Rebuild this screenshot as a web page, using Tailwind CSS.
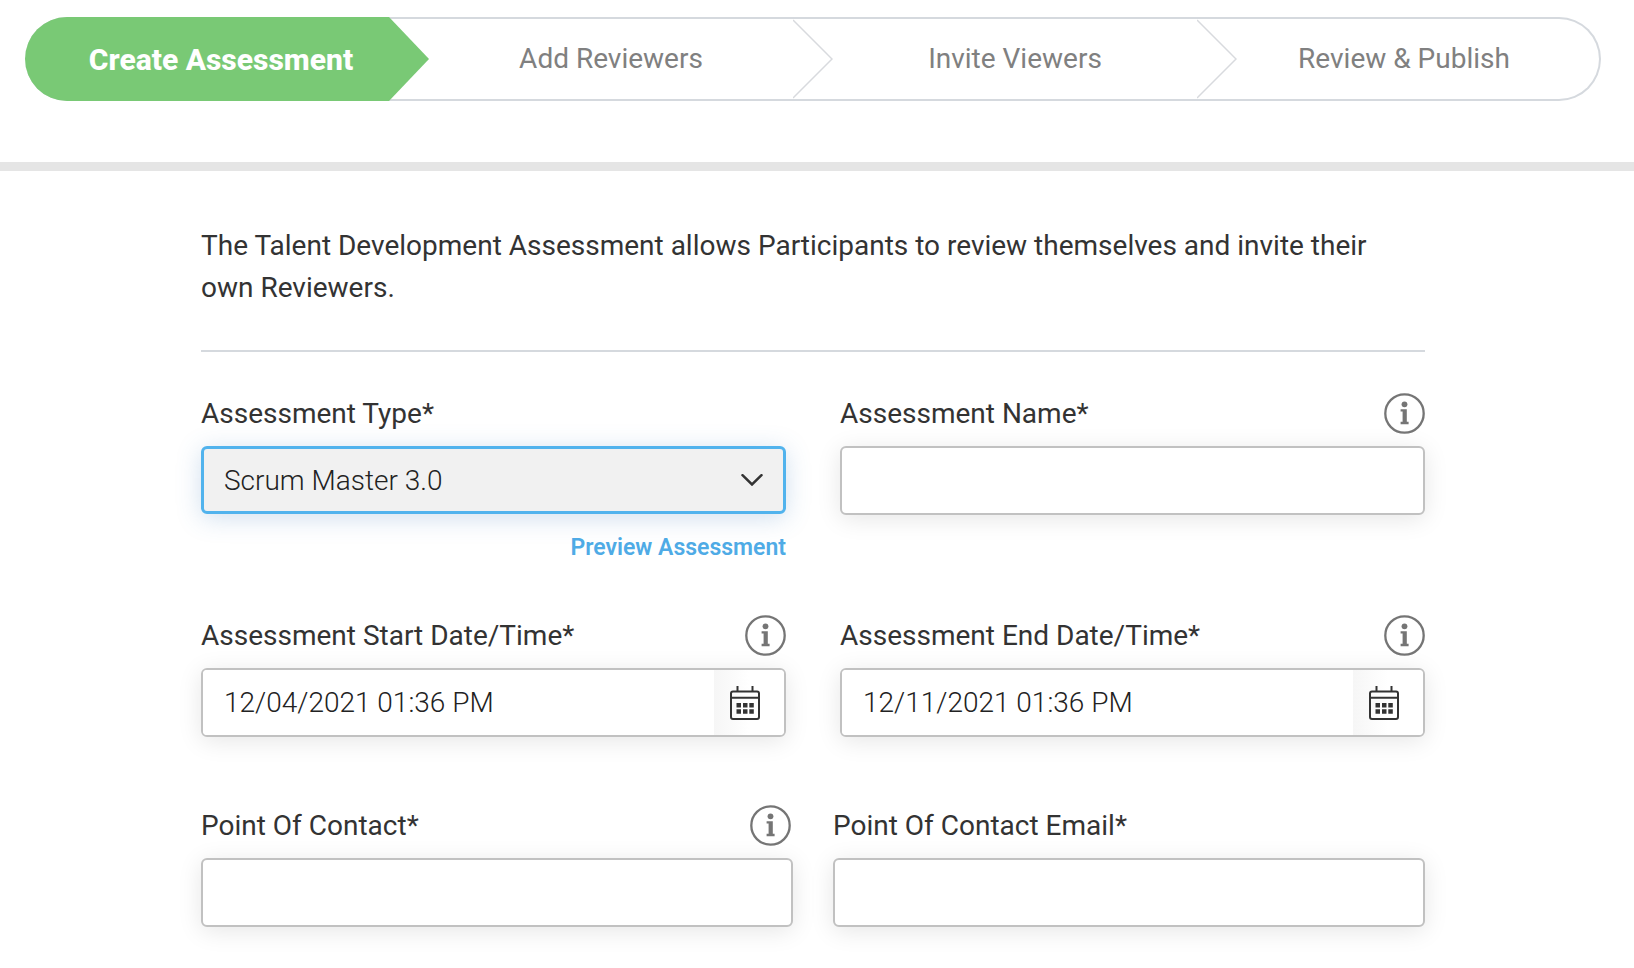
<!DOCTYPE html>
<html lang="en">
<head>
<meta charset="utf-8">
<meta name="viewport" content="width=device-width, initial-scale=1">
<title>Create Assessment</title>
<script src="https://cdn.jsdelivr.net/npm/@tailwindcss/browser@4"></script>
</head>
<body class="min-h-screen bg-white font-['Roboto',sans-serif] text-[28px] text-[#333333]">
<svg class="hidden" aria-hidden="true">
  <symbol id="info" viewBox="0 0 41 41">
    <circle cx="20.5" cy="20.5" r="19.2" fill="none" stroke="#757575" stroke-width="2.3"/>
    <circle cx="20.5" cy="11.3" r="2.9" fill="#757575"/>
    <path d="M16.6 16.2h6.2v12.6h1.8v2.4h-8v-2.4h2v-10.200h-2z" fill="#757575"/>
  </symbol>
  <symbol id="calendar" viewBox="0 0 30 34">
    <rect x="1" y="5.500" width="28" height="27.500" rx="2" fill="none" stroke="#333333" stroke-width="2"/>
    <path d="M1 11.700h28M7.500 0v6M22.500 0v6" fill="none" stroke="#333333" stroke-width="2"/>
    <path d="M6.500 17h4.500v4.500h-4.500zM13 17h4.500v4.500h-4.500zM19.300 17h4.500v4.500h-4.500zM6.500 23.300h4.500v4.500h-4.500zM13 23.300h4.500v4.500h-4.500zM19.300 23.300h4.500v4.500h-4.500z" fill="#333333"/>
  </symbol>
</svg>

<header class="border-b-9 border-[#e5e5e5] pt-[17px] pr-[33px] pb-[61px] pl-[25px]">
  <nav aria-label="Assessment steps">
    <ol class="grid h-[84px] grid-cols-[404fr_404fr_404fr_362fr] rounded-full border-y-2 border-r-2 border-[#d5d9de] text-[#808080]">
      <li class="-my-0.5 flex">
        <button class="flex flex-1 items-center justify-center rounded-l-full bg-[#79c975] pl-7 text-[30px] font-extrabold text-white" aria-current="step">Create Assessment</button>
        <svg class="h-full w-10 shrink-0" viewBox="0 0 40 84" aria-hidden="true"><path d="M0 0V84L40 42z" fill="#79c975"/></svg>
      </li>
      <li class="flex">
        <button class="flex-1">Add Reviewers</button>
        <svg class="h-full w-10 shrink-0" viewBox="0 0 40 80" aria-hidden="true"><path d="M0 1L39 40L0 79" fill="none" stroke="#d8dade" stroke-width="1.500"/></svg>
      </li>
      <li class="flex">
        <button class="flex-1">Invite Viewers</button>
        <svg class="h-full w-10 shrink-0" viewBox="0 0 40 80" aria-hidden="true"><path d="M0 1L39 40L0 79" fill="none" stroke="#d8dade" stroke-width="1.500"/></svg>
      </li>
      <li class="flex pr-7">
        <button class="flex-1">Review &amp; Publish</button>
      </li>
    </ol>
  </nav>
</header>

<main class="pr-2">
  <form class="mx-auto max-w-[1224px] pt-[54px] pb-10">
    <p class="border-b-2 border-[#d5d9de] pb-[41px] leading-[42px]">The Talent Development Assessment allows Participants to review themselves and invite their own Reviewers.</p>

    <div class="grid grid-cols-2 gap-x-[54px] pt-[41px]">
      <div>
        <div class="mb-3 flex h-[41px] items-center justify-between">
          <label for="type">Assessment Type*</label>
        </div>
        <div class="relative">
          <select id="type" class="block h-[68px] w-full appearance-none rounded-md border-3 border-[#51b3ed] bg-[#f1f1f1] px-5 pt-0.5 font-light text-[#222222] shadow-[0_4px_24px_rgba(70,130,190,0.25)] outline-none">
            <option>Scrum Master 3.0</option>
          </select>
          <svg class="pointer-events-none absolute top-7 right-[23px] h-3 w-[22px]" viewBox="0 0 22 12" aria-hidden="true"><path d="M1.500 1.200L11 10.500L20.500 1.200" fill="none" stroke="#333333" stroke-width="2.500" stroke-linecap="round"/></svg>
        </div>
        <div class="mt-4 text-right leading-8">
          <a href="#" class="text-[23px] font-semibold text-[#4fabe6]">Preview Assessment</a>
        </div>
      </div>
      <div>
        <div class="mb-3 flex h-[41px] items-center justify-between">
          <label for="name">Assessment Name*</label>
          <button type="button" aria-label="About the assessment name"><svg class="size-[41px]"><use href="#info"/></svg></button>
        </div>
        <input id="name" type="text" class="block h-[69px] w-full rounded-md border-2 border-[#c1c1c1] bg-white px-[22px] font-light text-[#222222] shadow-[0_4px_24px_rgba(0,0,0,0.1)] outline-none">
      </div>
    </div>

    <div class="grid grid-cols-2 gap-x-[54px] pt-[51px]">
      <div>
        <div class="mb-3 flex h-[41px] items-center justify-between">
          <label for="start">Assessment Start Date/Time*</label>
          <button type="button" aria-label="About the start date"><svg class="size-[41px]"><use href="#info"/></svg></button>
        </div>
        <div class="flex h-[69px] overflow-hidden rounded-md border-2 border-[#c1c1c1] bg-white shadow-[0_4px_24px_rgba(0,0,0,0.1)]">
          <input id="start" type="text" value="12/04/2021 01:36 PM" class="min-w-0 flex-1 bg-white px-[21px] font-light text-[#222222] outline-none">
          <button type="button" aria-label="Pick the start date" class="flex w-[70px] items-center bg-linear-to-r from-[#f6f6f6] to-white to-50% pl-4"><svg class="h-[34px] w-[30px]"><use href="#calendar"/></svg></button>
        </div>
      </div>
      <div>
        <div class="mb-3 flex h-[41px] items-center justify-between">
          <label for="end">Assessment End Date/Time*</label>
          <button type="button" aria-label="About the end date"><svg class="size-[41px]"><use href="#info"/></svg></button>
        </div>
        <div class="flex h-[69px] overflow-hidden rounded-md border-2 border-[#c1c1c1] bg-white shadow-[0_4px_24px_rgba(0,0,0,0.1)]">
          <input id="end" type="text" value="12/11/2021 01:36 PM" class="min-w-0 flex-1 bg-white px-[21px] font-light text-[#222222] outline-none">
          <button type="button" aria-label="Pick the end date" class="flex w-[70px] items-center bg-linear-to-r from-[#f6f6f6] to-white to-50% pl-4"><svg class="h-[34px] w-[30px]"><use href="#calendar"/></svg></button>
        </div>
      </div>
    </div>

    <div class="grid grid-cols-2 gap-x-10 pt-[68px]">
      <div>
        <div class="mb-3 flex h-[41px] items-center justify-between pr-0.5">
          <label for="contact">Point Of Contact*</label>
          <button type="button" aria-label="About the point of contact"><svg class="size-[41px]"><use href="#info"/></svg></button>
        </div>
        <input id="contact" type="text" class="block h-[69px] w-full rounded-md border-2 border-[#c1c1c1] bg-white px-[22px] font-light text-[#222222] shadow-[0_4px_24px_rgba(0,0,0,0.1)] outline-none">
      </div>
      <div>
        <div class="mb-3 flex h-[41px] items-center justify-between">
          <label for="email">Point Of Contact Email*</label>
        </div>
        <input id="email" type="email" class="block h-[69px] w-full rounded-md border-2 border-[#c1c1c1] bg-white px-[22px] font-light text-[#222222] shadow-[0_4px_24px_rgba(0,0,0,0.1)] outline-none">
      </div>
    </div>
  </form>
</main>
</body>
</html>
